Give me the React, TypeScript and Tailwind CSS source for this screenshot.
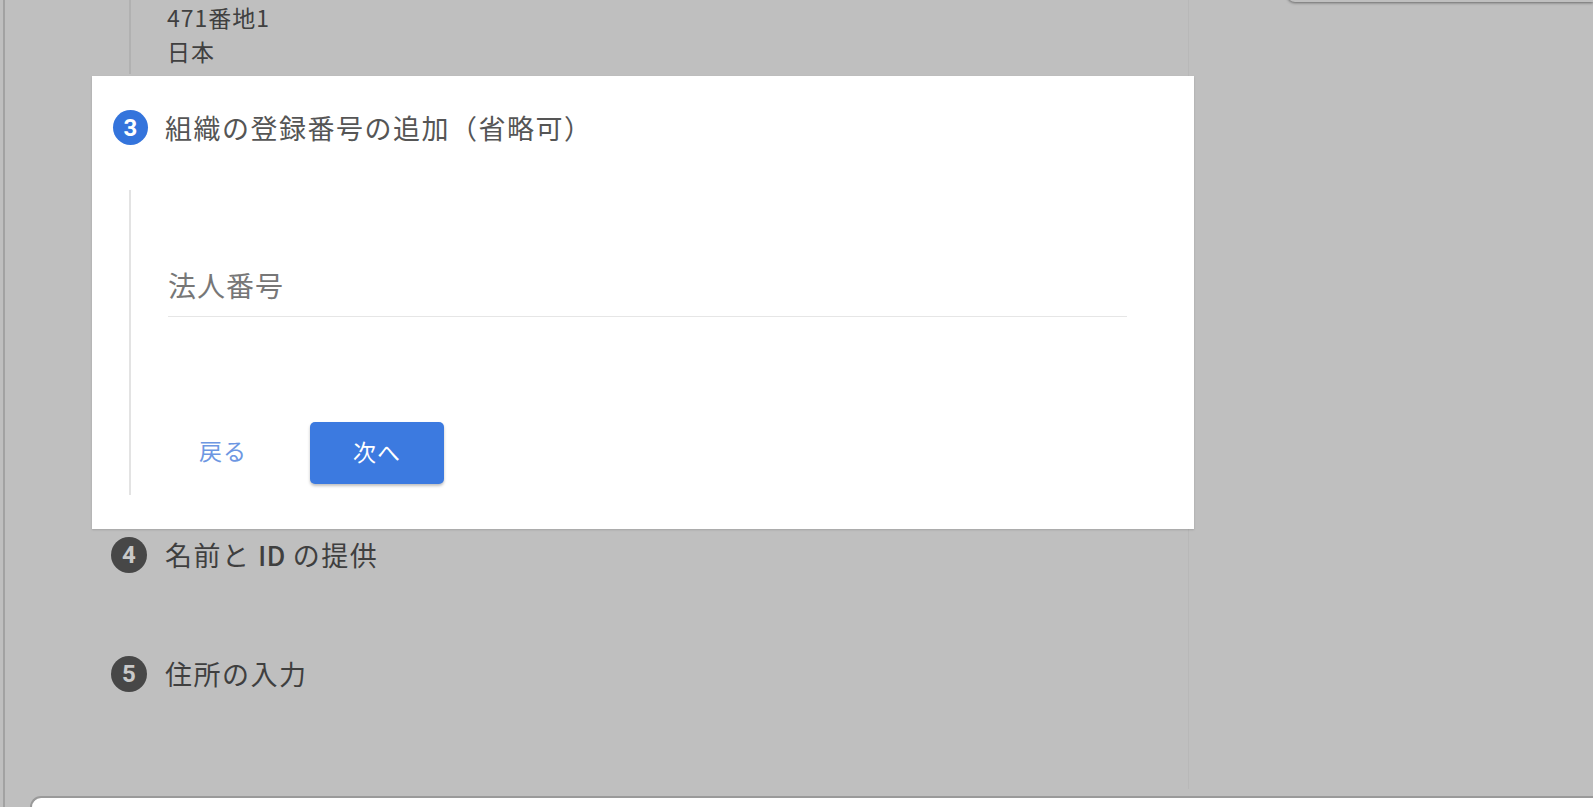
export default function App() {
  return (
    <div className="relative flex h-[807px] w-full overflow-hidden bg-[#bfbfbf] font-['Noto_Sans_CJK_JP',sans-serif]">
      {/* bottom edge of a popup sitting above the page */}
      <div className="absolute -top-[20px] left-[1287px] right-0 h-[22px] rounded-bl-[8px] bg-[#bfbfbf] shadow-[0_1px_3px_rgba(0,0,0,0.45)]" />

      <div className="ml-[3px] flex h-full flex-1 flex-col border-l-2 border-[#a2a2a2]">
        <div className="h-[789px] w-[1184px] border-r border-[#b8b8b8]">
          {/* tail of step 2 */}
          <div className="ml-[124px] h-[74px] border-l-2 border-[#b1b1b1] pl-[36px] text-[23px] leading-[34px] tracking-[1px] text-[#404040]">
            <div>471番地1</div>
            <div>日本</div>
          </div>

          {/* active step 3 */}
          <div className="ml-[87px] mt-[2px] h-[453px] w-[1102px] bg-white shadow-[0_1px_2px_rgba(0,0,0,0.15)]">
            <div className="flex items-center gap-[17px] pl-[21px] pt-[34px]">
              <div className="flex h-[35px] w-[35px] items-center justify-center rounded-full bg-[#3474dc] font-['Roboto',sans-serif] text-[24px] font-bold text-white">
                3
              </div>
              <div className="text-[27px] leading-[35px] tracking-[1.5px] text-[#555555]">
                組織の登録番号の追加（省略可）
              </div>
            </div>

            <div className="ml-[37px] mt-[45px] border-l-2 border-[#e3e3e3] pb-[11px] pl-[37px]">
              <div className="w-[959px] border-b-[1.5px] border-[#e6e6e6] pb-[11px] pt-[75px] text-[28px] leading-[40px] tracking-[1px] text-[#777777]">
                法人番号
              </div>
              <div className="mt-[105px] flex items-center gap-[32px]">
                <button className="h-[62px] w-[110px] pb-[5px] text-[23px] tracking-[1px] text-[#6d97e2]">
                  戻る
                </button>
                <button className="h-[62px] w-[134px] rounded-[5px] bg-[#3c7ae0] pb-[4px] text-[23px] tracking-[1px] text-white shadow-[0_2px_3px_rgba(0,0,0,0.25)]">
                  次へ
                </button>
              </div>
            </div>
          </div>

          {/* upcoming steps */}
          <div className="ml-[106px] mt-[8px] flex items-center gap-[18px]">
            <div className="flex h-[36px] w-[36px] items-center justify-center rounded-full bg-[#474747] font-['Roboto',sans-serif] text-[24px] font-bold text-[#c9c9c9]">
              4
            </div>
            <div className="text-[27px] leading-[36px] tracking-[1.5px] text-[#3f3f3f]">
              名前と <span className="font-medium tracking-[0px]">ID</span> の提供
            </div>
          </div>
          <div className="ml-[106px] mt-[83px] flex items-center gap-[18px]">
            <div className="flex h-[36px] w-[36px] items-center justify-center rounded-full bg-[#474747] font-['Roboto',sans-serif] text-[24px] font-bold text-[#c9c9c9]">
              5
            </div>
            <div className="text-[27px] leading-[36px] tracking-[1.5px] text-[#3f3f3f]">
              住所の入力
            </div>
          </div>
        </div>

        <div className="ml-[25px] mt-[7px] flex-1 rounded-tl-[12px] border-l-2 border-t-2 border-[#9a9a9a] bg-white" />
      </div>
    </div>
  );
}
